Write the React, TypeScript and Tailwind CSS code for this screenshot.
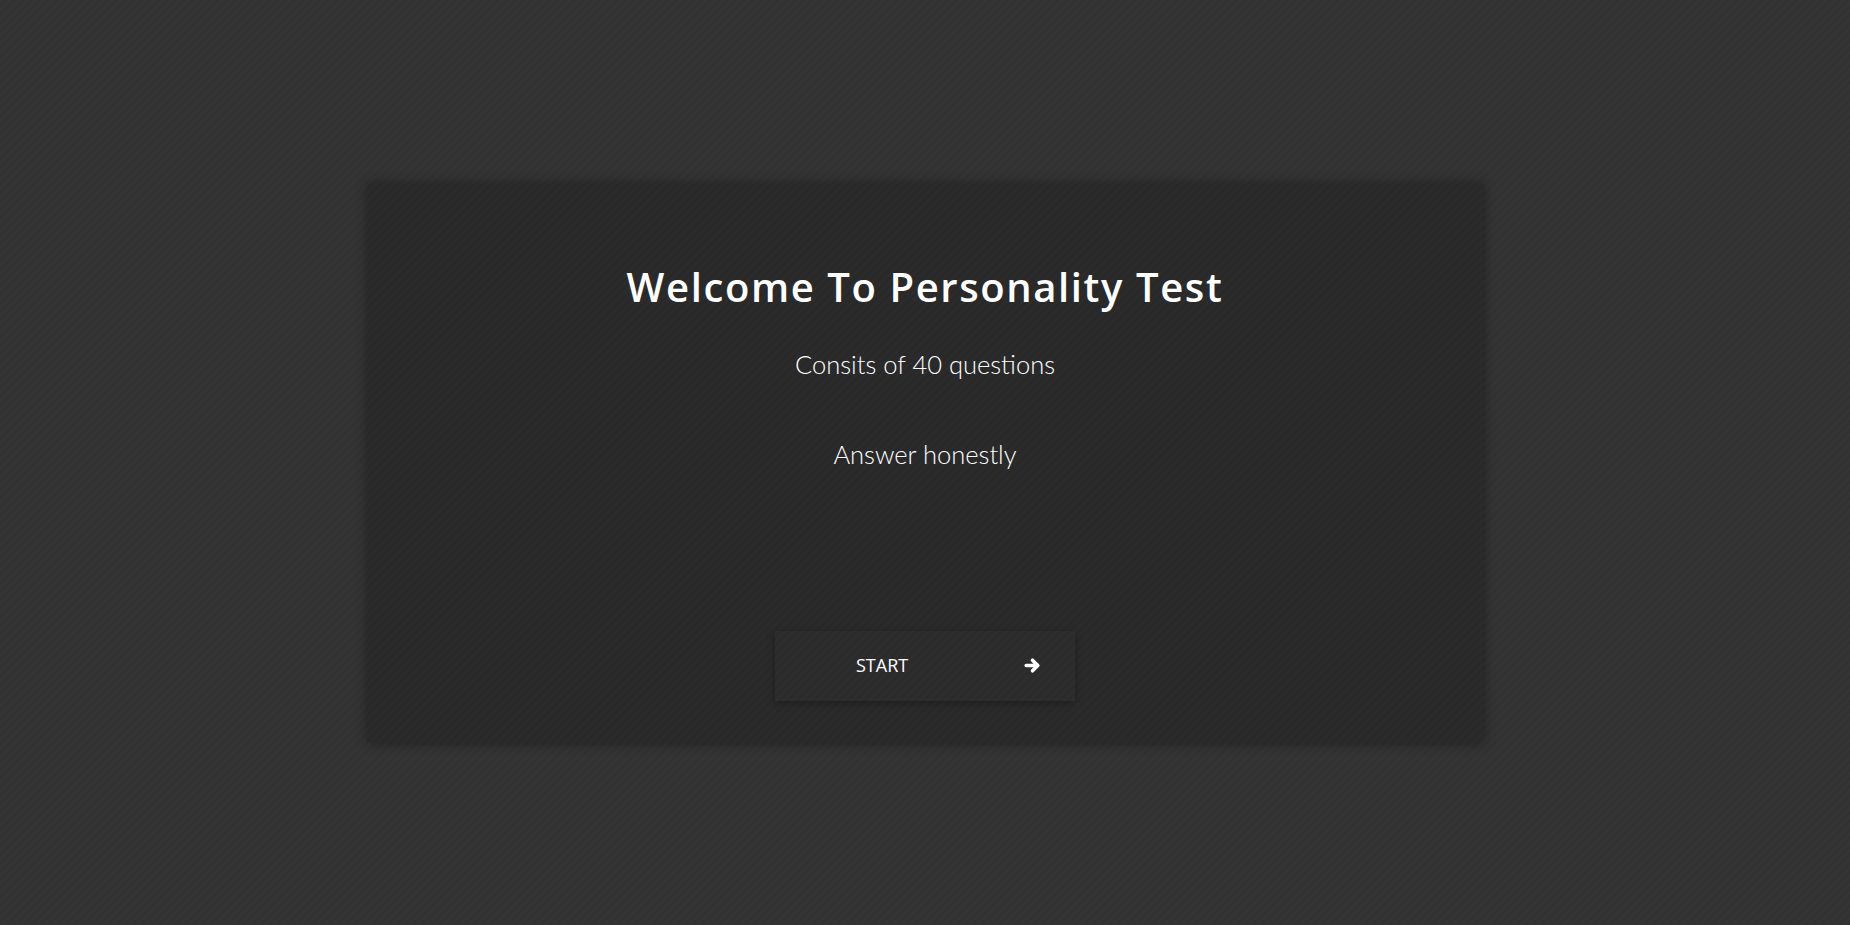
export default function App() {
  return (
    <div className="flex h-screen w-full items-center justify-center bg-[#333333] bg-[repeating-linear-gradient(135deg,#343434_0px,#343434_3px,#323232_3px,#323232_6px)]">
      <div className="flex h-[560px] w-[1117px] flex-col items-center rounded-[4px] bg-[#2a2a2a] bg-[repeating-linear-gradient(135deg,#2b2b2b_0px,#2b2b2b_3px,#292929_3px,#292929_6px)] pt-[80px] shadow-[0_0_12px_rgba(0,0,0,0.35)]">
        <h1 className="font-['Open_Sans',sans-serif] text-[40px] font-semibold leading-[48px] tracking-[1.6px] text-white">
          Welcome To Personality Test
        </h1>
        <p className="mt-[37px] font-['Lato',sans-serif] text-[25.5px] font-light leading-[32px] text-white">
          Consits of 40 questions
        </p>
        <p className="mt-[58px] font-['Lato',sans-serif] text-[25.5px] font-light leading-[32px] text-white">
          Answer honestly
        </p>
        <div className="mt-auto mb-[42px]">
          <button className="flex h-[70px] w-[300px] items-center bg-[#2c2c2c] bg-[repeating-linear-gradient(135deg,#2d2d2d_0px,#2d2d2d_3px,#2b2b2b_3px,#2b2b2b_6px)] pl-[81px] pr-[33px] shadow-[0_2px_8px_rgba(0,0,0,0.3)]">
            <span className="font-['Open_Sans',sans-serif] text-[18px] font-medium text-white">START</span>
            {/* chunky arrow like the old font-awesome one */}
            <svg className="ml-auto" width="18" height="17" viewBox="0 0 18 17" fill="none">
              <path
                d="M2.2 8.5h11.5M8.5 3.2l5.3 5.3-5.3 5.3"
                stroke="white"
                strokeWidth="3.6"
                strokeLinecap="round"
                strokeLinejoin="round"
              />
            </svg>
          </button>
        </div>
      </div>
    </div>
  );
}
